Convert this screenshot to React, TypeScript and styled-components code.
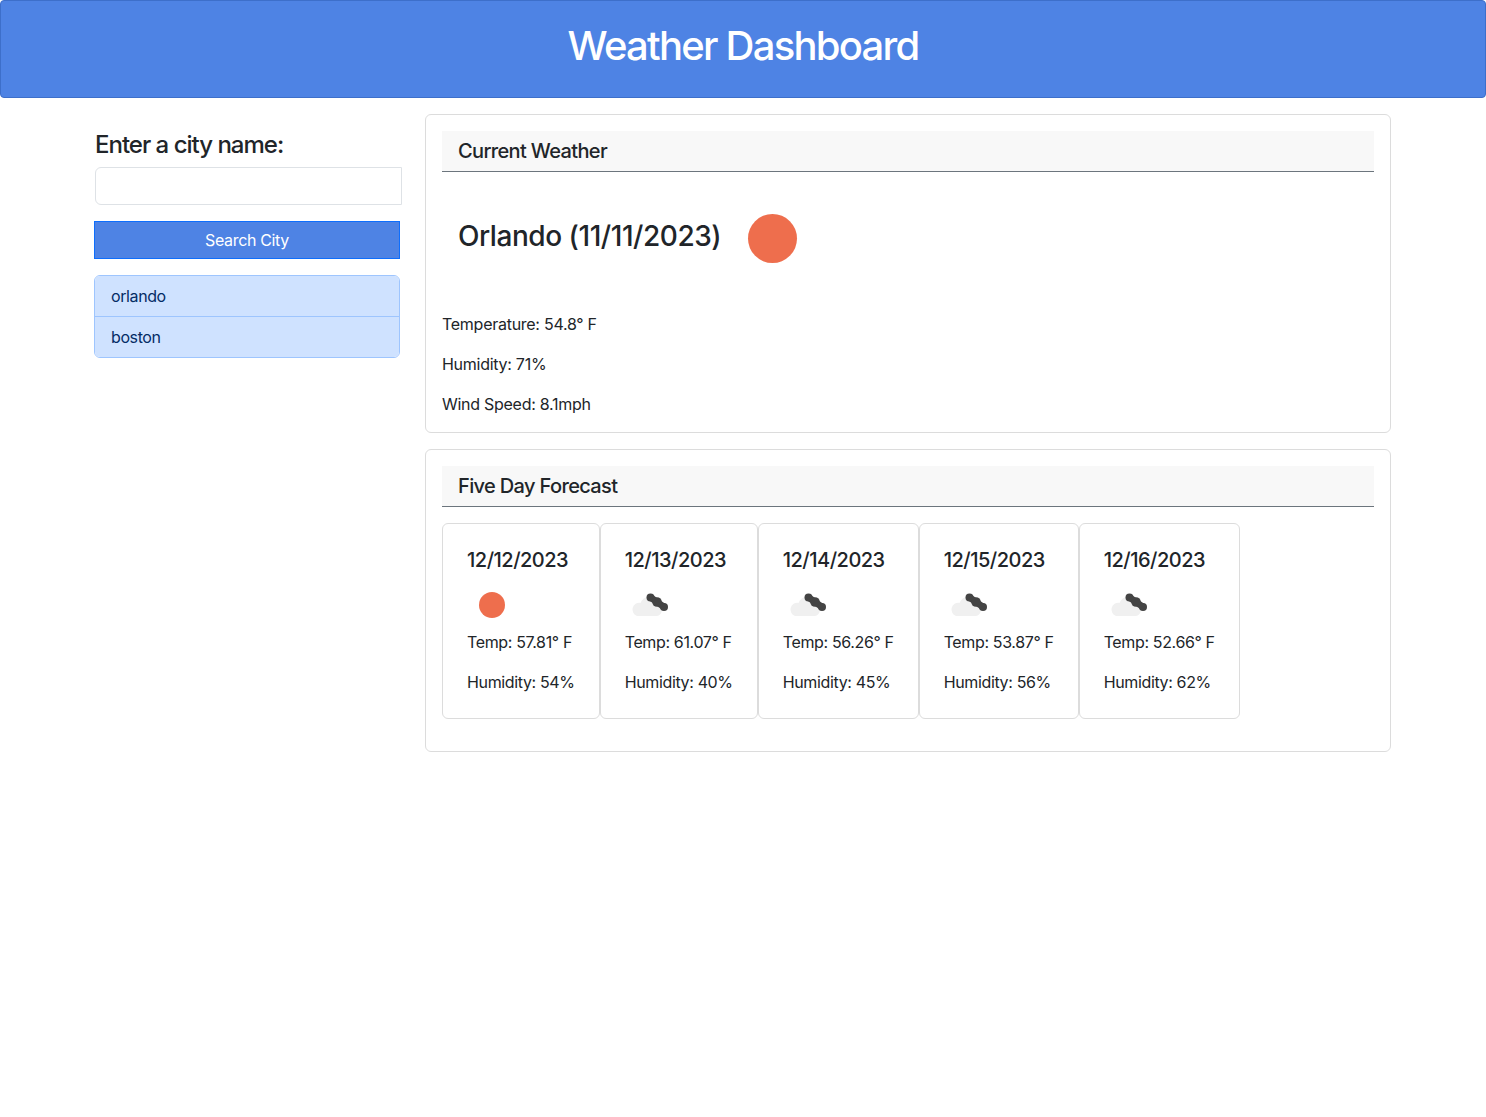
import React from 'react'
import styled, { createGlobalStyle } from 'styled-components'

const GlobalStyle = createGlobalStyle`
  * {
    box-sizing: border-box;
  }
  body {
    margin: 0;
    background: #fff;
    color: #212529;
    font-family: Inter, "Liberation Sans", sans-serif;
    font-size: 16px;
    line-height: 24px;
    letter-spacing: -0.27px;
  }
`

const Header = styled.header`
  height: 98px;
  padding-bottom: 6px;
  background-color: #4e83e4;
  border: 1px solid #3d6fca;
  border-radius: 4px;
  display: flex;
  justify-content: center;
  align-items: center;
`

const Title = styled.h1`
  margin: 0;
  color: #fff;
  font-size: 40px;
  line-height: 48px;
  font-weight: 500;
  letter-spacing: -1.75px;
`

const Main = styled.main`
  width: 1320px;
  margin: 16px auto 0;
  padding: 0 12px 0 11px;
  display: flex;
  align-items: flex-start;
`

const Sidebar = styled.aside`
  width: 331px;
  padding-top: 16px;
  flex-shrink: 0;
`

const Label = styled.h2`
  margin: 0 0 8px 1px;
  font-size: 24px;
  line-height: 29px;
  font-weight: 500;
  letter-spacing: -1px;
`

const CityInput = styled.input`
  display: block;
  width: 307px;
  height: 38px;
  margin-left: 1px;
  border: 1px solid #dee2e6;
  border-radius: 6px 0 0 6px;
  background: #fff;
`

const SearchButton = styled.button`
  display: block;
  width: 306px;
  height: 38px;
  margin-top: 16px;
  background: #4e83e4;
  border: 1px solid #0d6efd;
  color: #fff;
  font-family: inherit;
  font-size: 16px;
  letter-spacing: -0.35px;
`

const CityList = styled.ul`
  list-style: none;
  width: 306px;
  margin: 16px 0 0;
  padding: 0;
  border: 1px solid #9ec5fe;
  border-radius: 6px;
  overflow: hidden;
`

const CityItem = styled.li`
  height: 40px;
  padding: 8px 16px;
  background: #cfe2ff;
  color: #052c65;
  letter-spacing: -0.4px;

  & + & {
    height: 41px;
    border-top: 1px solid #9ec5fe;
  }
`

const Content = styled.div`
  flex: 1;
  display: flex;
  flex-direction: column;
  gap: 16px;
`

const Panel = styled.section<{ $height: number }>`
  height: ${(props) => props.$height}px;
  padding: 16px;
  border: 1px solid #dcdcdc;
  border-radius: 6px;
`

const PanelHeader = styled.div`
  height: 41px;
  padding: 8px 16px;
  background: #f8f8f8;
  border-bottom: 1px solid #6c757d;
  font-size: 20px;
  line-height: 24px;
  font-weight: 500;
  letter-spacing: -0.64px;
`

const CurrentRow = styled.div`
  display: flex;
  align-items: flex-start;
  height: 140px;
  padding: 42px 16px 0;
`

const CityTitle = styled.h3`
  margin: 5px 27px 0 0;
  font-size: 28px;
  line-height: 34px;
  font-weight: 500;
  letter-spacing: -0.45px;
`

const Sun = styled.span<{ $size: number }>`
  display: block;
  width: ${(props) => props.$size}px;
  height: ${(props) => props.$size}px;
  border-radius: 50%;
  background: #ee6e4d;
`

const Stat = styled.p`
  margin: 0 0 16px;
`

const ForecastRow = styled.div`
  display: flex;
  margin-top: 16px;
`

const DayCard = styled.article`
  height: 196px;
  padding: 24px;
  border: 1px solid #dcdcdc;
  border-radius: 6px;
`

const DayDate = styled.h5`
  margin: 0 0 20px;
  font-size: 20px;
  line-height: 24px;
  font-weight: 500;
  letter-spacing: -0.5px;
  white-space: nowrap;
`

const IconSlot = styled.div`
  height: 26px;
  margin-bottom: 12px;
  display: flex;
  align-items: center;
`

const DaySun = styled(Sun)`
  margin-left: 12px;
`

const DayLine = styled.p`
  margin: 0 0 16px;
  letter-spacing: -0.36px;
  white-space: nowrap;
`

function CloudIcon() {
  return (
    <svg width="50" height="30" viewBox="0 0 50 30">
      <path
        d="M12 26H31A6 6 0 0 0 32 14.100A8.500 8.500 0 0 0 15.500 12.900A6.800 6.800 0 0 0 12 26Z"
        fill="#f0f0f0"
      />
      <path d="M25 7L39 17" stroke="#444" strokeWidth="6.500" fill="none" />
      <circle cx="25.500" cy="7.500" r="4" fill="#444" />
      <circle cx="32" cy="12" r="4.800" fill="#444" />
      <circle cx="39" cy="17" r="4" fill="#444" />
    </svg>
  )
}

const days = [
  { date: '12/12/2023', temp: '57.81', humidity: 54, sun: true },
  { date: '12/13/2023', temp: '61.07', humidity: 40, sun: false },
  { date: '12/14/2023', temp: '56.26', humidity: 45, sun: false },
  { date: '12/15/2023', temp: '53.87', humidity: 56, sun: false },
  { date: '12/16/2023', temp: '52.66', humidity: 62, sun: false },
]

export default function App() {
  return (
    <>
      <GlobalStyle />
      <Header>
        <Title>Weather Dashboard</Title>
      </Header>
      <Main>
        <Sidebar>
          <Label>Enter a city name:</Label>
          <CityInput />
          <SearchButton>Search City</SearchButton>
          <CityList>
            <CityItem>orlando</CityItem>
            <CityItem>boston</CityItem>
          </CityList>
        </Sidebar>
        <Content>
          <Panel $height={319}>
            <PanelHeader>Current Weather</PanelHeader>
            <CurrentRow>
              <CityTitle>Orlando (11/11/2023)</CityTitle>
              <Sun $size={49} />
            </CurrentRow>
            <Stat>Temperature: 54.8° F</Stat>
            <Stat>Humidity: 71%</Stat>
            <Stat>Wind Speed: 8.1mph</Stat>
          </Panel>
          <Panel $height={303}>
            <PanelHeader>Five Day Forecast</PanelHeader>
            <ForecastRow>
              {days.map((day) => (
                <DayCard key={day.date}>
                  <DayDate>{day.date}</DayDate>
                  <IconSlot>{day.sun ? <DaySun $size={26} /> : <CloudIcon />}</IconSlot>
                  <DayLine>Temp: {day.temp}° F</DayLine>
                  <DayLine>Humidity: {day.humidity}%</DayLine>
                </DayCard>
              ))}
            </ForecastRow>
          </Panel>
        </Content>
      </Main>
    </>
  )
}
